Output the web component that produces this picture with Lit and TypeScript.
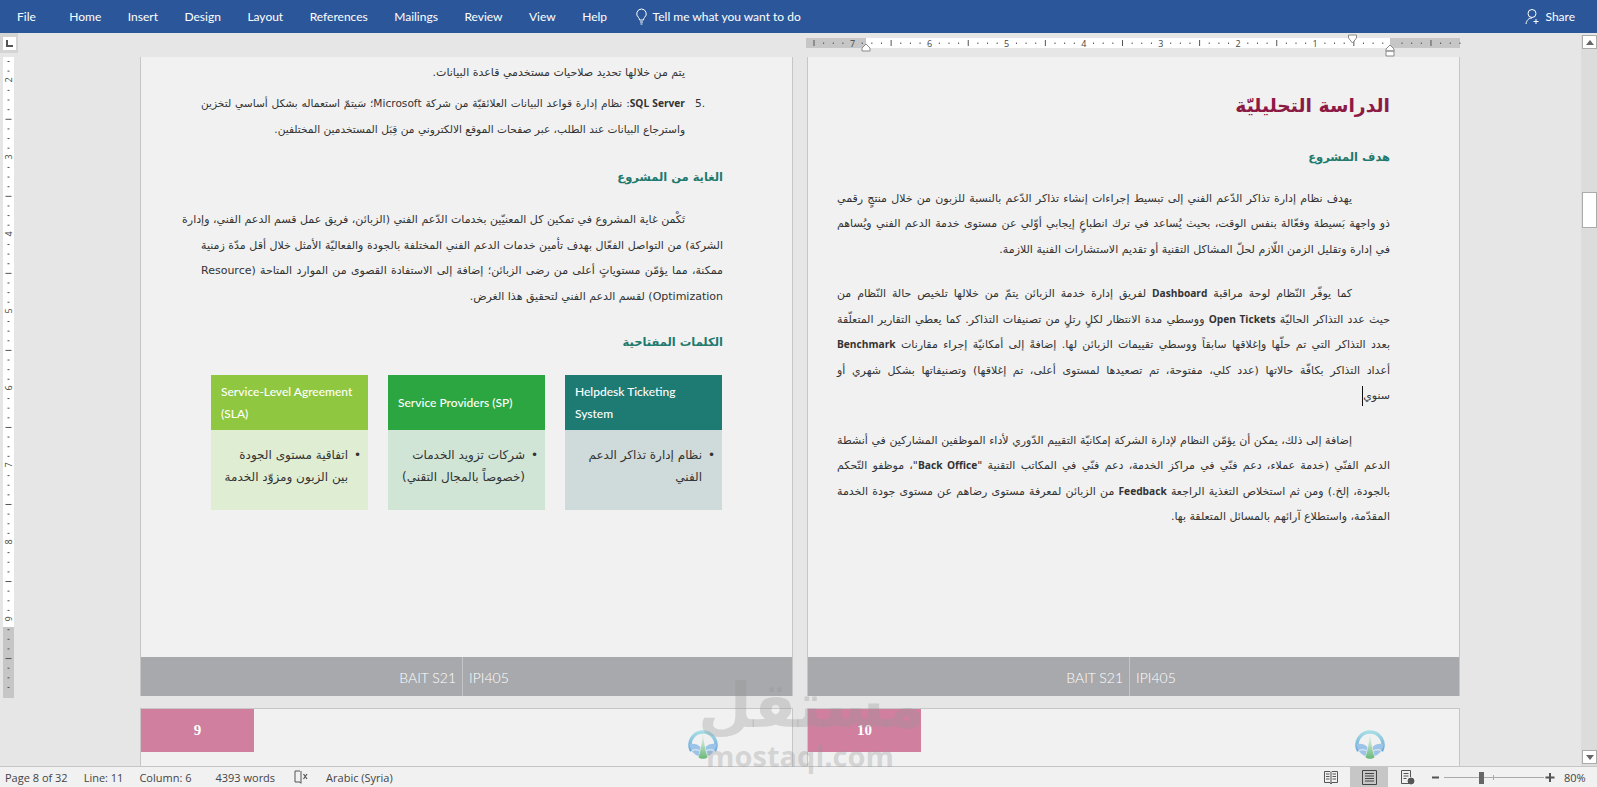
import { LitElement, html, css, svg } from "lit";
import { customElement } from "lit/decorators.js";

const menu = ["Home", "Insert", "Design", "Layout", "References", "Mailings", "Review", "View", "Help"];
const hTicks = Array.from({ length: 68 }, (_, i) => 7.5 + i * 9.64);
const vTicks = Array.from({ length: 66 }, (_, i) => 4 + i * 9.63);

const logo = (id: string) => html`<svg class="logo" viewBox="0 0 30 30">
  <defs>
    <linearGradient id="lg${id}" x1="0" y1="0" x2="0" y2="1"><stop offset="0" stop-color="#a5dde4"/><stop offset="1" stop-color="#6aa6da"/></linearGradient>
    <linearGradient id="gg${id}" x1="0" y1="0" x2="0" y2="1"><stop offset="0" stop-color="#f1f1f1"/><stop offset=".35" stop-color="#c5e5d0"/><stop offset="1" stop-color="#69b878"/></linearGradient>
  </defs>
  <path d="M3.500 22A13 13 0 1 1 26.500 22" fill="none" stroke="url(#lg${id})" stroke-width="3.400"/>
  <path d="M1.500 15c4-1 8.500 0 11 3l-2 9C6 26 2 21 1.500 15z" fill="#9cc4e8"/>
  <path d="M28.500 15c-4-1-8.500 0-11 3l2 9C24 26 28 21 28.500 15z" fill="#9cc4e8"/>
  <path d="M4 21.500c2-1 5-1 7.500 0M26 21.500c-2-1-5-1-7.500 0" fill="none" stroke="#f1f1f1"/>
  <path d="M15 3.500c.6 8 2 17 4.500 25-1.300.8-3 1.300-4.500 1.300s-3.200-.5-4.500-1.300c2.500-8 3.900-17 4.500-25z" fill="url(#gg${id})"/>
</svg>`;

function para(lines: string[], cls = "") {
  return html`<div class="para ${cls}">
    ${lines.map((l, i) => html`<div class="line ${i === 0 ? "first" : ""} ${i === lines.length - 1 ? "last" : ""}">${l}</div>`)}
  </div>`;
}

@customElement("app-root")
export class AppRoot extends LitElement {
  static styles = css`
    :host { display: block; height: 787px; width: 1597px; overflow: hidden; font-family: "Open Sans", sans-serif; }
    .app { position: relative; display: flex; flex-direction: column; height: 787px; background: #e6e6e6; overflow: hidden; }

    .ribbon { height: 33px; flex: none; background: #2b579a; color: #fff; display: flex; align-items: center; padding: 0 22px 0 17px; font: 12px Lato, sans-serif; gap: 26.500px; box-sizing: border-box; }
    .ribbon .file { margin-right: 7px; }
    .tell { display: flex; align-items: center; gap: 4px; }
    .tell svg { width: 15px; height: 17px; }
    .share { margin-left: auto; display: flex; align-items: center; gap: 4px; }
    .share svg { width: 16px; height: 17px; }

    .main { flex: 1; min-height: 0; display: grid; grid-template-columns: 140px 1fr 16px; grid-template-rows: 24px 1fr; }
    .tabbox { width: 18px; height: 20px; background: #d4d4d4; display: flex; align-items: center; justify-content: center; }
    .tabbox span { width: 13px; height: 13px; background: #fff; display: flex; align-items: center; justify-content: center; }
    .vruler { margin-left: 3px; display: block; }
    .hruler { margin-left: 666px; display: block; overflow: visible; }
    .rtext { font: 9px "Open Sans", sans-serif; fill: #444; }

    .spread { grid-column: 2; grid-row: 2; display: flex; gap: 14px; overflow: hidden; min-height: 0; }
    .sheet { width: 653px; display: flex; flex-direction: column; gap: 12px; }
    .page { height: 639px; flex: none; box-sizing: border-box; background: #f1f1f1; border-left: 1px solid #c6c6c6; border-right: 1px solid #c6c6c6; display: flex; flex-direction: column; }
    .body { flex: 1; min-height: 0; direction: rtl; padding-right: 69px; color: #333; font-family: "DejaVu Sans", sans-serif; font-size: 11px; }
    .left .body { padding-left: 60px; padding-top: 3px; }
    .right .body { padding-left: 29px; padding-top: 32px; }
    .line { height: 25.500px; line-height: 25.500px; white-space: nowrap; text-align: justify; text-align-last: justify; }
    .line.last { text-align-last: right; }
    .para .first { text-indent: 38px; }
    .para { margin-bottom: 19px; }
    .list { padding-right: 38px; margin-bottom: 0; }
    .list .first { text-indent: 0; }
    .list .line { position: relative; height: 26px; line-height: 26px; }
    .plain .first { text-indent: 0; margin-bottom: 4px; }
    .tight { font-size: 10.600px; }
    .num { position: absolute; right: -20px; top: 0; direction: ltr; text-indent: 0; }
    b.lat { font-family: "Open Sans", sans-serif; font-weight: 700; font-size: 10.200px; }
    h1 { margin: 0 0 22px; font-size: 18.800px; line-height: 34px; color: #8c1a45; font-weight: 700; }
    h2 { margin: 0; font-size: 11.500px; line-height: 24px; color: #1f7a6e; font-weight: 700; }
    .left h2 { margin: 21px 0 18px; }
    .left .list + h2 { margin-top: 23px; }
    .right h2 { margin: 0 0 16.500px; }
    .caret { display: inline-block; width: 1px; height: 20px; background: #111; vertical-align: middle; }

    .cards { display: flex; gap: 20px; margin: 21px 1px 0 0; width: 511px; }
    .card { width: 157px; height: 135px; display: flex; flex-direction: column; }
    .chead { height: 55px; direction: ltr; display: flex; align-items: center; padding: 0 12px 0 10px; box-sizing: border-box; color: #fff; font: 500 12px/22px Lato, sans-serif; }
    .cbody { flex: 1; padding: 14px 7px 0 4px; font-size: 12px; line-height: 22px; }
    .cline { position: relative; padding-right: 13px; white-space: nowrap; }
    .dot::before { content: "•"; position: absolute; right: 0; }
    .c1 .chead { background: #1d7b74; } .c1 .cbody { background: #cfdbda; }
    .c2 .chead { background: #2ca640; } .c2 .cbody { background: #d1e5d6; }
    .c3 .chead { background: #8fc740; } .c3 .cbody { background: #dfedd3; }

    .foot { height: 39px; flex: none; background: #a7a9ac; color: #fff; display: flex; font: 300 14px Lato, sans-serif; }
    .foot div { display: flex; align-items: center; padding-top: 2px; box-sizing: border-box; }
    .foot .a { width: 322px; justify-content: flex-end; padding-right: 6px; border-right: 1px solid #c4c5c7; }
    .foot .b { padding-left: 6px; }

    .next { flex: 1; min-height: 62px; box-sizing: border-box; background: #f1f1f1; border: 1px solid #c6c6c6; border-width: 1px 1px 0; display: flex; align-items: flex-start; }
    .pink { width: 113px; height: 43px; background: #d07f9f; color: #fff; font: 700 15px "Liberation Serif", serif; display: flex; align-items: center; justify-content: center; }
    .logo { width: 30px; height: 30px; margin: 20px 0 0 434px; display: block; }

    .scroll { grid-column: 3; grid-row: 1 / 3; margin-top: 2px; background: #dcdcdc; display: flex; flex-direction: column; }
    .sbtn { height: 14px; flex: none; background: #fff; border: 1px solid #ababab; box-sizing: border-box; display: flex; align-items: center; justify-content: center; margin-left: 1px; }
    .sbtn i { width: 0; height: 0; border-left: 4px solid transparent; border-right: 4px solid transparent; }
    .up i { border-bottom: 5px solid #666; }
    .down i { border-top: 5px solid #666; }
    .thumb { height: 36px; margin: 143px 0 0 1px; background: #fff; border: 1px solid #ababab; box-sizing: border-box; flex: none; }
    .down { margin-top: auto; margin-bottom: 2px; }

    .status { height: 21px; flex: none; box-sizing: border-box; background: #f1f1f1; border-top: 1px solid #c6c6c6; display: flex; align-items: center; font-size: 11px; color: #444; padding-left: 5px; }
    .status .it { margin-right: 16px; white-space: nowrap; }
    .status .col { margin-right: 24px; }
    .status .w { margin-right: 19px; }
    .status .sp { margin-right: 17px; display: block; }
    .views { margin-left: auto; display: flex; align-items: center; height: 100%; }
    .views svg { display: block; }
    .vb { width: 38px; height: 100%; display: flex; align-items: center; justify-content: center; }
    .vb.on { background: #c6c6c6; }
    .zoom { display: flex; align-items: center; margin: 0 9px 0 6px; }
    .plus { margin-left: 1px; }
    .status .pct { width: 20px; margin-right: 13px; }

    .mark { position: absolute; left: 698px; top: 672px; width: 200px; text-align: center; color: rgba(150, 150, 150, 0.32); pointer-events: none; font-family: "DejaVu Sans", sans-serif; font-weight: 700; }
    .mark .ar { font-size: 62px; line-height: 68px; }
    .mark .en { font-size: 29px; line-height: 32px; padding-left: 4px; font-family: "Open Sans", sans-serif; white-space: nowrap; }
  `;

  hruler() {
    return html`<svg class="hruler" width="654" height="24" viewBox="0 0 654 24">
      <rect x="0" y="5" width="654" height="10" fill="#c6c6c6"/>
      <rect x="60" y="5" width="524" height="10" fill="#fff"/>
      ${hTicks.map((x, i) => {
        const k = i % 8;
        if (k === 4) return null;
        return k === 0
          ? svg`<rect x=${x} y="7" width="1" height="6" fill="#555"/>`
          : svg`<rect x=${x} y="9.500" width="1" height="1.500" fill="#555"/>`;
      })}
      ${[7, 6, 5, 4, 3, 2, 1].map((n, i) => svg`<rect x=${44 + i * 77.1} y="5" width="5" height="10" fill=${i === 0 ? "#c6c6c6" : "#fff"}/><text class="rtext" x=${46.500 + i * 77.1} y="13.500" text-anchor="middle">${n}</text>`)}
      <path d="M56 15l4-4 4 4v3h-8z" fill="#fff" stroke="#8a8a8a"/>
      <path d="M542.500 2h8v3l-4 5-4-5z" fill="#fff" stroke="#8a8a8a"/>
      <path d="M580 16l4-4 4 4v2h-8zM580 18h8v5h-8z" fill="#fff" stroke="#8a8a8a"/>
    </svg>`;
  }

  vruler() {
    const rows = [2, 3, 4, 5, 6, 7, 8, 9];
    return html`<svg class="vruler" width="11" height="641" viewBox="0 0 11 641">
      <rect width="11" height="570" fill="#fff"/>
      <rect y="570" width="11" height="71" fill="#c6c6c6"/>
      ${vTicks.map((y, i) => {
        const k = i % 8;
        if (k === 2) return null;
        return k === 6
          ? svg`<rect x="2.500" y=${y} width="6" height="1" fill="#555"/>`
          : svg`<rect x="4.500" y=${y} width="2" height="1" fill="#555"/>`;
      })}
      ${rows.map((n, i) => svg`<text class="rtext" transform="translate(8.500 ${23 + i * 77}) rotate(-90)" text-anchor="middle">${n}</text>`)}
    </svg>`;
  }

  card(c: string, title: string, lines: string[]) {
    return html`<div class="card ${c}">
      <div class="chead">${title}</div>
      <div class="cbody">${lines.map((l, i) => html`<div class="cline ${i === 0 ? "dot" : ""}">${l}</div>`)}</div>
    </div>`;
  }

  render() {
    const foot = html`<div class="foot"><div class="a">BAIT S21</div><div class="b">IPI405</div></div>`;
    return html`<div class="app">
      <div class="ribbon">
        <span class="file">File</span>
        ${menu.map((m) => html`<span>${m}</span>`)}
        <span class="tell">
          <svg viewBox="0 0 15 17" fill="none" stroke="#fff"><path d="M7.500 1a4.800 4.800 0 0 0-3 8.500c.6.6 1 1.500 1 2.500h4c0-1 .4-1.900 1-2.500a4.800 4.800 0 0 0-3-8.500zM6 14h3M6.500 16h2"/></svg>
          Tell me what you want to do
        </span>
        <span class="share">
          <svg viewBox="0 0 16 17" fill="none" stroke="#fff"><circle cx="7" cy="5.500" r="4"/><path d="M1 16c.5-3.500 2.500-6 6-6M11 11v5M8.500 13.500h5"/></svg>
          Share
        </span>
      </div>

      <div class="main">
        <div class="tabbox"><span><svg width="7" height="7" viewBox="0 0 7 7"><path d="M0 0h2v5h5v2H0z" fill="#555"/></svg></span></div>
        <div>${this.hruler()}</div>
        <div>${this.vruler()}</div>
        <div class="spread">
          <div class="sheet left">
            <div class="page">
              <div class="body">
                <div class="list para plain">
                  <div class="line first last">يتم من خلالها تحديد صلاحيات مستخدمي قاعدة البيانات.</div>
                  <div class="line tight"><span class="num">5.</span><b class="lat">SQL Server</b>: نظام إدارة قواعد البيانات العلائقيّة من شركة Microsoft؛ سَيتمّ استعماله بشكل أساسي لتخزين</div>
                  <div class="line last tight">واسترجاع البيانات عند الطلب، عبر صفحات الموقع الالكتروني من قِبَل المستخدمين المختلفين.</div>
                </div>
                <h2>الغاية من المشروع</h2>
                ${para([
                  "تَكْمن غاية المشروع في تمكين كل المعنيّين بخدمات الدّعم الفني (الزبائن، فريق عمل قسم الدعم الفني، وإدارة",
                  "الشركة) من التواصل الفعّال بهدف تأمين خدمات الدعم الفني المختلفة بالجودة والفعاليّة الأمثل خلال أقل مدّة زمنية",
                  "ممكنة، مما يؤمّن مستوياتٍ أعلى من رضى الزبائن؛ إضافة إلى الاستفادة القصوى من الموارد المتاحة (Resource",
                  "Optimization) لقسم الدعم الفني لتحقيق هذا الغرض.",
                ])}
                <h2>الكلمات المفتاحية</h2>
                <div class="cards">
                  ${this.card("c1", "Helpdesk Ticketing System", ["نظام إدارة تذاكر الدعم", "الفني"])}
                  ${this.card("c2", "Service Providers (SP)", ["شركات تزويد الخدمات", "(خصوصاً بالمجال التقني)"])}
                  ${this.card("c3", "Service-Level Agreement (SLA)", ["اتفاقية مستوى الجودة", "بين الزبون ومزوّد الخدمة"])}
                </div>
              </div>
              ${foot}
            </div>
            <div class="next"><div class="pink">9</div>${logo("a")}</div>
          </div>

          <div class="sheet right">
            <div class="page">
              <div class="body">
                <h1>الدراسة التحليليّة</h1>
                <h2>هدف المشروع</h2>
                ${para([
                  "يهدف نظام إدارة تذاكر الدّعم الفني إلى تبسيط إجراءات إنشاء تذاكر الدّعم بالنسبة للزبون من خلال منتجٍ رقمي",
                  "ذو واجهة بَسيطة وفعّالة بنفس الوقت، بحيث يُساعد في ترك انطباعٍ إيجابي أوّلي عن مستوى خدمة الدعم الفني ويُساهم",
                  "في إدارة وتقليل الزمن اللّازم لحلّ المشاكل التقنية أو تقديم الاستشارات الفنية اللازمة.",
                ])}
                <div class="para">
                  <div class="line first">كما يوفّر النّظام لوحة مراقبة <b class="lat">Dashboard</b> لفريق إدارة خدمة الزبائن يتمّ من خلالها تلخيص حالة النّظام من</div>
                  <div class="line">حيث عدد التذاكر الحاليّة <b class="lat">Open Tickets</b> ووسطي مدة الانتظار لكلٍ رتلٍ من تصنيفات التذاكر. كما يعطي التقارير المتعلّقة</div>
                  <div class="line">بعدد التذاكر التي تم حلّها وإغلاقها سابقاً ووسطي تقييمات الزبائن لها. إضافةً إلى أمكانيّة إجراء مقارنات <b class="lat">Benchmark</b></div>
                  <div class="line">أعداد التذاكر بكافّة حالاتها (عدد كلي، مفتوحة، تم تصعيدها لمستوى أعلى، تم إغلاقها) وتصنيفاتها بشكل شهري أو</div>
                  <div class="line last">سنوي<span class="caret"></span></div>
                </div>
                <div class="para">
                  <div class="line first">إضافة إلى ذلك، يمكن أن يؤمّن النظام لإدارة الشركة إمكانيّة التقييم الدّوري لأداء الموظفين المشاركين في أنشطة</div>
                  <div class="line">الدعم الفنّي (خدمة عملاء، دعم فنّي في مراكز الخدمة، دعم فنّي في المكاتب التقنية "<b class="lat">Back Office</b>"، موظفو التّحكم</div>
                  <div class="line">بالجودة، إلخ.) ومن ثم استخلاص التغذية الراجعة <b class="lat">Feedback</b> من الزبائن لمعرفة مستوى رضاهم عن مستوى جودة الخدمة</div>
                  <div class="line last">المقدّمة، واستطلاع آرائهم بالمسائل المتعلقة بها.</div>
                </div>
              </div>
              ${foot}
            </div>
            <div class="next"><div class="pink">10</div>${logo("b")}</div>
          </div>
        </div>
        <div class="scroll">
          <div class="sbtn up"><i></i></div>
          <div class="thumb"></div>
          <div class="sbtn down"><i></i></div>
        </div>
      </div>

      <div class="status">
        <span class="it">Page 8 of 32</span>
        <span class="it">Line: 11</span>
        <span class="it col">Column: 6</span>
        <span class="it w">4393 words</span>
        <svg class="sp" width="15" height="14" viewBox="0 0 15 14" fill="none" stroke="#555"><path d="M6 1H1v11h5l1 1.500M7 1v12"/><path d="M9.500 4l3.500 5M13 4l-3.500 5" stroke-width="1.200"/></svg>
        <span class="it">Arabic (Syria)</span>
        <div class="views">
          <div class="vb"><svg width="14" height="15" viewBox="0 0 14 15" fill="none" stroke="#555"><path d="M.5 1.500h5.500l1 1 1-1h5.500v11h-5.500l-1 1.500-1-1.500H.5zM7 2.500v11M2 4h3.500M2 6.500h3.500M2 9h3.500M8.500 4H12M8.500 6.500H12M8.500 9H12"/></svg></div>
          <div class="vb on"><svg width="15" height="15" viewBox="0 0 15 15" fill="none" stroke="#444"><path d="M.5.500h14v14H.5zM3 3.500h9M3 6h9M3 8.500h9M3 11h9"/></svg></div>
          <div class="vb"><svg width="15" height="15" viewBox="0 0 15 15" fill="none" stroke="#555"><path d="M9 13.500H1.500V.5h9V7M3.500 3.500h5M3.500 6h5M3.500 8.500h3"/><circle cx="11" cy="11" r="3" fill="#555"/></svg></div>
          <div class="zoom">
            <svg width="112" height="15" viewBox="0 0 112 15"><rect x="0" y="6.500" width="7" height="2" fill="#555"/><rect x="12" y="7" width="100" height="1" fill="#aaa"/><rect x="47" y="2" width="5" height="12" fill="#666"/><rect x="61" y="5" width="1" height="5" fill="#aaa"/></svg>
            <svg class="plus" width="10" height="15" viewBox="0 0 10 15"><path d="M4 3h2v3.500h3.500v2H6V12H4V8.500H.5v-2H4z" fill="#555"/></svg>
          </div>
          <span class="pct it">80%</span>
        </div>
      </div>

      <div class="mark"><div class="ar">مستقل</div><div class="en">mostaql.com</div></div>
    </div>`;
  }
}
